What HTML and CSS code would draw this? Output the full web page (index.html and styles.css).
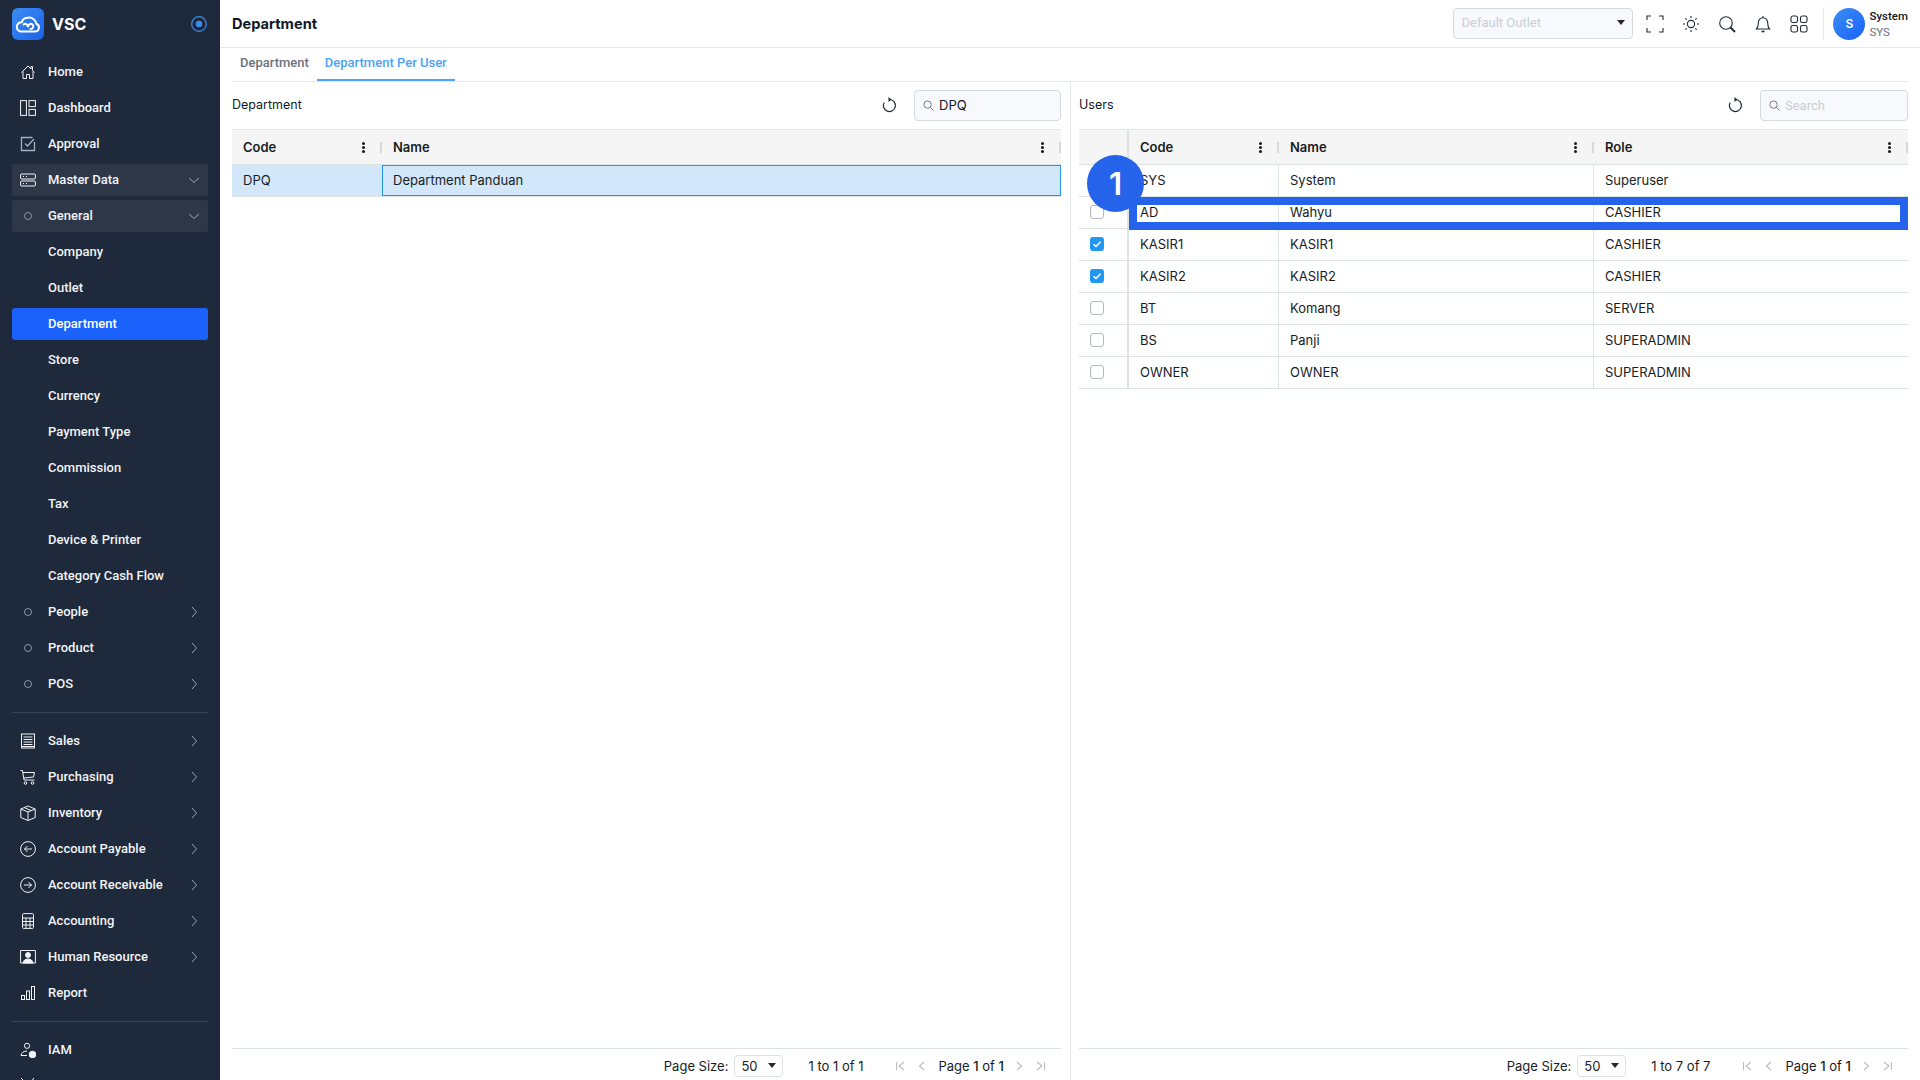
FILE: index.html

```html
<html lang="en">

<head>
    <meta charset="UTF-8">
    <meta name="viewport" content="width=device-width, initial-scale=1.0">
    <title>Department</title>
    <link rel="stylesheet" href="styles.css">
</head>

<body>
    <aside class="sidebar">
        <div class="brand">
            <div class="brand-logo">
                <svg width="26" height="22" viewBox="0 0 26 22" fill="none" stroke="#fff" stroke-width="2" stroke-linejoin="round" stroke-linecap="round">
                    <path d="M6 18.500h14a4 4 0 0 0 1.200-7.800 7 7 0 0 0-8.200-6 6 6 0 0 0-6.200 4.600A4.600 4.600 0 0 0 6 18.500z"/>
                    <path d="M8.500 11.500c2.200-1.600 4 .2 4.500 2 .5-1.800 2.500-3.600 4.500-2 1.800 1.500.5 4.500-2 4.500"/>
                </svg>
            </div>
            <span class="brand-name">VSC</span>
            <svg class="brand-pin" width="16" height="16" viewBox="0 0 16 16"><circle cx="8" cy="8" r="7.300" fill="none" stroke="#3b8df0" stroke-width="1.200"/><circle cx="8" cy="8" r="3.200" fill="#3b8df0"/></svg>
        </div>
        <nav class="menu">
            <a class="menu-item"><svg class="menu-icon" viewBox="0 0 16 16"><path d="M1.500 8.500 8 2l3 3V2.500h1.500V6.500l2 2M3 7.500v7h3.500v-4h3v4H13v-7"/></svg>Home</a>
            <a class="menu-item"><svg class="menu-icon" viewBox="0 0 16 16"><rect x=".6" y=".6" width="5.800" height="14.800"/><rect x="9" y=".6" width="6.400" height="6"/><rect x="9" y="9.400" width="6.400" height="6"/></svg>Dashboard</a>
            <a class="menu-item"><svg class="menu-icon icon-dim" viewBox="0 0 16 16"><path d="M14.500 6v8.500h-13v-13h11"/><path d="m5 7.500 2.500 2.500 6.500-7"/></svg>Approval</a>
            <a class="menu-item open"><svg class="menu-icon" viewBox="0 0 16 16"><rect x=".6" y="2" width="14.800" height="5" rx="1"/><rect x=".6" y="9" width="14.800" height="5" rx="1"/><path d="M3 4.500h1M3 11.500h1M6 4.500h1M6 11.500h1"/></svg>Master Data<svg class="chevron" viewBox="0 0 12 12"><path d="m1 4 5 4.500L11 4"/></svg></a>
            <a class="menu-item open"><span class="menu-dot"></span>General<svg class="chevron" viewBox="0 0 12 12"><path d="m1 4 5 4.500L11 4"/></svg></a>
            <a class="menu-item">Company</a>
            <a class="menu-item">Outlet</a>
            <a class="menu-item active">Department</a>
            <a class="menu-item">Store</a>
            <a class="menu-item">Currency</a>
            <a class="menu-item">Payment Type</a>
            <a class="menu-item">Commission</a>
            <a class="menu-item">Tax</a>
            <a class="menu-item">Device &amp; Printer</a>
            <a class="menu-item">Category Cash Flow</a>
            <a class="menu-item"><span class="menu-dot"></span>People<svg class="chevron" viewBox="0 0 12 12"><path d="m4 1 4.500 5L4 11"/></svg></a>
            <a class="menu-item"><span class="menu-dot"></span>Product<svg class="chevron" viewBox="0 0 12 12"><path d="m4 1 4.500 5L4 11"/></svg></a>
            <a class="menu-item"><span class="menu-dot"></span>POS<svg class="chevron" viewBox="0 0 12 12"><path d="m4 1 4.500 5L4 11"/></svg></a>
            <div class="menu-divider"></div>
            <a class="menu-item"><svg class="menu-icon" viewBox="0 0 16 16"><rect x="1.500" y="1" width="13" height="14"/><path d="M3.500 4h9M3.500 6.500h9M3.500 9h9M3.500 11.500h9M1.500 13.500h13"/></svg>Sales<svg class="chevron" viewBox="0 0 12 12"><path d="m4 1 4.500 5L4 11"/></svg></a>
            <a class="menu-item"><svg class="menu-icon" viewBox="0 0 16 16"><path d="M.5 1.500h2l1.500 9.500h10.500M3 3.500h11.500l-1 4.500-9.500 1"/><circle cx="5.500" cy="14" r="1.300"/><circle cx="12.500" cy="14" r="1.300"/></svg>Purchasing<svg class="chevron" viewBox="0 0 12 12"><path d="m4 1 4.500 5L4 11"/></svg></a>
            <a class="menu-item"><svg class="menu-icon" viewBox="0 0 16 16"><path d="M8 1 .8 4v8.500L8 15.500l7.200-3V4z"/><path d="M.8 4 8 7l7.200-3M8 7v8.500M4 2.500l7 3"/></svg>Inventory<svg class="chevron" viewBox="0 0 12 12"><path d="m4 1 4.500 5L4 11"/></svg></a>
            <a class="menu-item"><svg class="menu-icon" viewBox="0 0 16 16"><circle cx="8" cy="8" r="7.400"/><path d="M12 8H4.500M7.500 5 4.500 8l3 3"/></svg>Account Payable<svg class="chevron" viewBox="0 0 12 12"><path d="m4 1 4.500 5L4 11"/></svg></a>
            <a class="menu-item"><svg class="menu-icon" viewBox="0 0 16 16"><circle cx="8" cy="8" r="7.400"/><path d="M4 8h7.500M8.500 5l3 3-3 3"/></svg>Account Receivable<svg class="chevron" viewBox="0 0 12 12"><path d="m4 1 4.500 5L4 11"/></svg></a>
            <a class="menu-item"><svg class="menu-icon" viewBox="0 0 16 16"><rect x="2.500" y=".6" width="11" height="14.800" rx="1"/><path d="M2.500 5h11M2.500 8.500h11M2.500 12h11M6 5v10.400M10 5v10.400"/></svg>Accounting<svg class="chevron" viewBox="0 0 12 12"><path d="m4 1 4.500 5L4 11"/></svg></a>
            <a class="menu-item"><svg class="menu-icon" viewBox="0 0 16 16"><path d="M.6 1.500h14.800v12.500H.6z"/><circle cx="8" cy="6" r="2.500" fill="currentColor"/><path d="M3 14c.5-3 2.500-4 5-4s4.500 1 5 4z" fill="currentColor"/></svg>Human Resource<svg class="chevron" viewBox="0 0 12 12"><path d="m4 1 4.500 5L4 11"/></svg></a>
            <a class="menu-item"><svg class="menu-icon" viewBox="0 0 16 16"><rect x="1.500" y="10.500" width="3" height="4"/><rect x="6.500" y="6" width="3" height="8.500"/><rect x="11.500" y="1.500" width="3" height="13"/></svg>Report</a>
            <div class="menu-divider"></div>
            <a class="menu-item"><svg class="menu-icon" viewBox="0 0 16 16"><circle cx="7" cy="3.800" r="2.600"/><path d="M1 13.500c.3-3 3-4.500 6-4.500M1 13.500h6"/><circle cx="12.500" cy="12.500" r="3.300" fill="currentColor"/></svg>IAM</a>
            <a class="menu-item"><svg class="menu-icon" viewBox="0 0 16 16"><path d="M1 0l6 6M14 0 9 6M6 10l-4 4M10 10l4 4"/></svg></a>
        </nav>
    </aside>

    <div class="main">
        <header class="topbar">
            <h1>Department</h1>
            <div class="topbar-right">
                <div class="outlet-select"><span>Default Outlet</span><i class="caret"></i></div>
                <svg class="top-icon" viewBox="0 0 18 18"><path d="M1 5V1h4M13 1h4v4M17 13v4h-4M5 17H1v-4"/></svg>
                <svg class="top-icon" viewBox="0 0 18 18"><circle cx="9" cy="9" r="3.600"/><path d="M9 1v2M9 15v2M1 9h2M15 9h2M3.300 3.300l1.400 1.400M13.300 13.300l1.400 1.400M3.300 14.700l1.400-1.400M13.300 4.700l1.400-1.400"/></svg>
                <svg class="top-icon" viewBox="0 0 18 18"><circle cx="8" cy="8" r="6.300"/><path d="m12.500 12.500 4.500 4.500" stroke-width="1.800"/></svg>
                <svg class="top-icon" viewBox="0 0 18 18"><path d="M2.500 14h13c-1.500-1.500-1.800-3-1.800-6A4.700 4.700 0 0 0 9 2.800 4.700 4.700 0 0 0 4.300 8c0 3-.3 4.500-1.800 6zM9 1v1.800"/><path d="M7.500 16.500h3" stroke-width="1.600"/></svg>
                <svg class="top-icon" viewBox="0 0 18 18"><rect x="1" y="1" width="6.500" height="6.500" rx="1.800"/><rect x="10.500" y="1" width="6.500" height="6.500" rx="1.800"/><rect x="1" y="10.500" width="6.500" height="6.500" rx="1.800"/><rect x="10.500" y="10.500" width="6.500" height="6.500" rx="1.800"/></svg>
                <div class="user">
                    <div class="avatar">S</div>
                    <div class="user-text"><b>System</b><span>SYS</span></div>
                </div>
            </div>
        </header>

        <div class="tabs">
            <a class="tab">Department</a>
            <a class="tab active">Department Per User</a>
        </div>

        <div class="panels">
            <section class="panel panel-left">
                <div class="toolbar">
                    <span class="toolbar-title">Department</span>
                    <svg class="refresh" viewBox="0 0 16 16"><path d="M8.500 2.500a6 6 0 1 1-5.300 3"/><path d="M7.500 0 10.500 2.500 7.500 5z" fill="currentColor" stroke="none"/></svg>
                    <div class="search">
                        <svg viewBox="0 0 12 12"><circle cx="5" cy="5" r="4"/><path d="m8 8 3.500 3.500"/></svg>
                        <span class="search-value">DPQ</span>
                    </div>
                </div>
                <div class="grid">
                    <div class="grid-row grid-head">
                        <div class="cell col-code-l">Code<i class="dots"></i><i class="sep"></i></div>
                        <div class="cell col-fill">Name<i class="dots"></i><i class="sep"></i></div>
                    </div>
                    <div class="grid-row selected">
                        <div class="cell col-code-l">DPQ</div>
                        <div class="cell col-fill focused">Department Panduan</div>
                    </div>
                </div>
                <div class="pager">
                    <span>Page Size:</span>
                    <div class="size-select">50<i class="caret"></i></div>
                    <span class="pager-count">1 to 1 of 1</span>
                    <svg class="pager-icon" viewBox="0 0 12 12"><path d="M2.500 2v8M10 2 5 6l5 4"/></svg>
                    <svg class="pager-icon" viewBox="0 0 12 12"><path d="M8 2 3.500 6 8 10"/></svg>
                    <span class="pager-page">Page <b>1</b> of <b>1</b></span>
                    <svg class="pager-icon" viewBox="0 0 12 12"><path d="M4 2l4.500 4L4 10"/></svg>
                    <svg class="pager-icon" viewBox="0 0 12 12"><path d="M2 2l5 4-5 4M9.500 2v8"/></svg>
                </div>
            </section>

            <section class="panel panel-right">
                <div class="toolbar">
                    <span class="toolbar-title">Users</span>
                    <svg class="refresh" viewBox="0 0 16 16"><path d="M8.500 2.500a6 6 0 1 1-5.300 3"/><path d="M7.500 0 10.500 2.500 7.500 5z" fill="currentColor" stroke="none"/></svg>
                    <div class="search">
                        <svg viewBox="0 0 12 12"><circle cx="5" cy="5" r="4"/><path d="m8 8 3.500 3.500"/></svg>
                        <span class="search-holder">Search</span>
                    </div>
                </div>
                <div class="grid">
                    <div class="grid-row grid-head">
                        <div class="cell col-check"></div>
                        <div class="cell col-code">Code<i class="dots"></i><i class="sep"></i></div>
                        <div class="cell col-name">Name<i class="dots"></i><i class="sep"></i></div>
                        <div class="cell col-fill">Role<i class="dots"></i><i class="sep"></i></div>
                    </div>
                    <div class="grid-row">
                        <div class="cell col-check"><span class="checkbox"></span></div>
                        <div class="cell col-code">SYS</div>
                        <div class="cell col-name">System</div>
                        <div class="cell col-fill">Superuser</div>
                    </div>
                    <div class="grid-row">
                        <div class="cell col-check"><span class="checkbox"></span></div>
                        <div class="cell col-code">AD</div>
                        <div class="cell col-name">Wahyu</div>
                        <div class="cell col-fill">CASHIER</div>
                    </div>
                    <div class="grid-row">
                        <div class="cell col-check"><span class="checkbox checked"><svg viewBox="0 0 14 14"><path d="m3.500 7.200 2.500 2.300 4.500-4.800"/></svg></span></div>
                        <div class="cell col-code">KASIR1</div>
                        <div class="cell col-name">KASIR1</div>
                        <div class="cell col-fill">CASHIER</div>
                    </div>
                    <div class="grid-row">
                        <div class="cell col-check"><span class="checkbox checked"><svg viewBox="0 0 14 14"><path d="m3.500 7.200 2.500 2.300 4.500-4.800"/></svg></span></div>
                        <div class="cell col-code">KASIR2</div>
                        <div class="cell col-name">KASIR2</div>
                        <div class="cell col-fill">CASHIER</div>
                    </div>
                    <div class="grid-row">
                        <div class="cell col-check"><span class="checkbox"></span></div>
                        <div class="cell col-code">BT</div>
                        <div class="cell col-name">Komang</div>
                        <div class="cell col-fill">SERVER</div>
                    </div>
                    <div class="grid-row">
                        <div class="cell col-check"><span class="checkbox"></span></div>
                        <div class="cell col-code">BS</div>
                        <div class="cell col-name">Panji</div>
                        <div class="cell col-fill">SUPERADMIN</div>
                    </div>
                    <div class="grid-row">
                        <div class="cell col-check"><span class="checkbox"></span></div>
                        <div class="cell col-code">OWNER</div>
                        <div class="cell col-name">OWNER</div>
                        <div class="cell col-fill">SUPERADMIN</div>
                    </div>
                    <div class="callout-box"></div>
                    <div class="callout-badge">1</div>
                </div>
                <div class="pager">
                    <span>Page Size:</span>
                    <div class="size-select">50<i class="caret"></i></div>
                    <span class="pager-count">1 to 7 of 7</span>
                    <svg class="pager-icon" viewBox="0 0 12 12"><path d="M2.500 2v8M10 2 5 6l5 4"/></svg>
                    <svg class="pager-icon" viewBox="0 0 12 12"><path d="M8 2 3.500 6 8 10"/></svg>
                    <span class="pager-page">Page <b>1</b> of <b>1</b></span>
                    <svg class="pager-icon" viewBox="0 0 12 12"><path d="M4 2l4.500 4L4 10"/></svg>
                    <svg class="pager-icon" viewBox="0 0 12 12"><path d="M2 2l5 4-5 4M9.500 2v8"/></svg>
                </div>
            </section>
        </div>
    </div>
</body>

</html>
```

FILE: styles.css

```css
* {
    box-sizing: border-box;
}

body {
    margin: 0;
    height: 100vh;
    display: flex;
    overflow: hidden;
    background: #fff;
    color: #181d1f;
    font-family: 'Inter', 'Liberation Sans', sans-serif;
    font-size: 13px;
}

/* sidebar */
.sidebar {
    width: 220px;
    height: 100vh;
    flex-shrink: 0;
    overflow: hidden;
    background: #1e293b;
    color: #f1f3f6;
    padding: 8px 12px 0;
}

.brand {
    display: flex;
    align-items: center;
    height: 32px;
    margin-bottom: 16px;
}

.brand-logo {
    width: 32px;
    height: 32px;
    border-radius: 6px;
    background: linear-gradient(135deg, #3b8df5, #1c62e8);
    display: flex;
    justify-content: center;
    align-items: center;
}

.brand-name {
    margin-left: 8px;
    font-size: 16px;
    font-weight: 700;
    color: #fff;
}

.brand-pin {
    margin-left: auto;
    margin-right: 1px;
}

.menu-item {
    display: flex;
    align-items: center;
    height: 32px;
    margin-bottom: 4px;
    padding-left: 36px;
    padding-bottom: 2px;
    position: relative;
    border-radius: 3px;
    font-family: 'Roboto', sans-serif;
    font-size: 13px;
    font-weight: 500;
}

.menu-item.open {
    background: #2d3748;
}

.menu-item.active {
    background: #1a62fb;
    color: #fff;
}

.menu-icon {
    position: absolute;
    left: 8px;
    top: 8px;
    width: 16px;
    height: 16px;
    fill: none;
    stroke: currentColor;
    stroke-width: 1;
}

.icon-dim {
    stroke: #a8afba;
    stroke-width: 1.3;
}

.menu-dot {
    position: absolute;
    left: 12px;
    top: 12px;
    width: 8px;
    height: 8px;
    border: 1px solid #8d95a3;
    border-radius: 50%;
}

.chevron {
    position: absolute;
    right: 8px;
    top: 10px;
    width: 12px;
    height: 12px;
    fill: none;
    stroke: #a9b0bc;
    stroke-width: 0.9;
}

.menu-divider {
    height: 1px;
    margin: 12px 0;
    background: #374356;
}

/* top bar */
.main {
    flex: 1;
    min-width: 0;
    display: flex;
    flex-direction: column;
}

.topbar {
    height: 48px;
    flex-shrink: 0;
    display: flex;
    align-items: center;
    justify-content: space-between;
    padding: 0 12px;
    border-bottom: 1px solid #e5e7eb;
}

.topbar h1 {
    margin: 0;
    font-size: 14.600px;
    font-weight: 700;
    color: #111827;
}

.topbar-right {
    display: flex;
    align-items: center;
}

.outlet-select {
    width: 180px;
    height: 31px;
    margin-right: 13px;
    padding: 0 7px 2px;
    display: flex;
    align-items: center;
    justify-content: space-between;
    background: #f7f9fc;
    border: 1px solid #d5dae2;
    border-radius: 4px;
    font-family: 'Roboto', sans-serif;
    color: #c9ced7;
}

.caret {
    display: inline-block;
    width: 0;
    height: 0;
    border-left: 4px solid transparent;
    border-right: 4px solid transparent;
    border-top: 5px solid #1f2937;
}

.top-icon {
    width: 18px;
    height: 18px;
    margin-right: 18px;
    fill: none;
    stroke: #1f2937;
    stroke-width: 1.100;
}

.user {
    display: flex;
    align-items: center;
    height: 32px;
    margin-left: -3px;
    padding-left: 9px;
    border-left: 1px solid #e5e7eb;
}

.avatar {
    width: 32px;
    height: 32px;
    border-radius: 50%;
    background: linear-gradient(135deg, #3b8df5, #1a62fb);
    color: #fff;
    font-size: 12px;
    font-weight: 600;
    display: flex;
    justify-content: center;
    align-items: center;
}

.user-text {
    margin-left: 4px;
    display: flex;
    flex-direction: column;
    font-family: 'Roboto', sans-serif;
    font-size: 11.500px;
    line-height: 16px;
}

.user-text b {
    font-weight: 500;
    color: #111827;
}

.user-text span {
    color: #6b7280;
}

/* tabs */
.tabs {
    height: 34px;
    flex-shrink: 0;
    margin: 0 12px;
    display: flex;
    border-bottom: 1px solid #e5e7eb;
}

.tab {
    height: 33px;
    padding: 0 8px 2px;
    display: flex;
    align-items: center;
    font-family: 'Roboto', sans-serif;
    font-size: 13px;
    font-weight: 500;
    color: #6b7280;
    border-bottom: 2px solid transparent;
}

.tab.active {
    color: #4da3f7;
    border-bottom-color: #4da3f7;
}

/* panels */
.panels {
    flex: 1;
    min-height: 0;
    display: flex;
}

.panel {
    display: flex;
    flex-direction: column;
    min-width: 0;
}

.panel-left {
    width: 851px;
    padding: 0 9px 0 12px;
    border-right: 1px solid #e5e7eb;
}

.panel-left .search {
    width: 147px;
}

.panel-right {
    flex: 1;
    padding: 0 12px 0 8px;
}

.toolbar {
    height: 47px;
    flex-shrink: 0;
    display: flex;
    align-items: center;
}

.toolbar-title {
    margin-right: auto;
    margin-bottom: 2px;
    font-size: 12.500px;
    color: #111827;
}

.refresh {
    width: 16px;
    height: 16px;
    margin-right: 17px;
    margin-bottom: 2px;
    fill: none;
    stroke: #1f2937;
    stroke-width: 1.200;
    color: #1f2937;
}

.search {
    width: 148px;
    height: 31px;
    padding: 0 8px;
    display: flex;
    align-items: center;
    gap: 5px;
    background: #f7f9fc;
    border: 1px solid #d5dae2;
    border-radius: 4px;
}

.search svg {
    width: 11px;
    height: 11px;
    fill: none;
    stroke: #6b7280;
    stroke-width: 1;
}

.search-value {
    margin-bottom: 1px;
    color: #111827;
}

.search-holder {
    margin-bottom: 1px;
    font-family: 'Roboto', sans-serif;
    color: #c9ced7;
}

/* grid */
.grid {
    flex: 1;
    min-height: 0;
    position: relative;
}

.grid-row {
    display: flex;
    height: 32px;
    border-bottom: 1px solid #dde2e2;
}

.grid-head {
    height: 36px;
    border-top: 1px solid #e5e5e5;
    background: #f5f5f5;
    font-weight: 600;
}

.selected {
    background: #d2e8fa;
}

.cell {
    position: relative;
    display: flex;
    align-items: center;
    padding: 0 11px 1px;
}

.col-check {
    width: 50px;
    padding: 0 0 1px 11px;
    border-right: 2px solid #dde2e2;
}

.col-code {
    width: 150px;
    border-right: 1px solid #dde2e2;
}

.col-name {
    width: 315px;
    border-right: 1px solid #dde2e2;
}

.col-code-l {
    width: 150px;
}

.col-fill {
    flex: 1;
}

.grid-head .cell {
    padding-bottom: 0;
    border-right: none;
}

.grid-head .col-check {
    border-right: 2px solid #dde2e2;
}

.focused {
    border: 1px solid #2196f3;
    padding: 0 10px 1px;
}

.dots {
    position: absolute;
    right: 17px;
    top: 12px;
    width: 3px;
    height: 3px;
    border-radius: 50%;
    background: #181d1f;
    box-shadow: 0 4px 0 #181d1f, 0 8px 0 #181d1f;
}

.sep {
    position: absolute;
    right: 0;
    top: 12px;
    width: 2px;
    height: 11px;
    background: #d8d8d8;
}

.checkbox {
    display: block;
    width: 14px;
    height: 14px;
    border: 1px solid #b5b9bd;
    border-radius: 3px;
    background: #fff;
}

.checkbox.checked {
    border: none;
    background: #2196f3;
}

.checkbox svg {
    display: block;
    fill: none;
    stroke: #fff;
    stroke-width: 1.500;
}

/* guide markers over the grid */
.callout-box {
    position: absolute;
    left: 50px;
    right: 0;
    top: 68px;
    height: 33px;
    border: 8px solid #2563eb;
}

.callout-badge {
    position: absolute;
    left: 8px;
    top: 26px;
    width: 57px;
    height: 57px;
    border-radius: 50%;
    background: #2563eb;
    color: #fff;
    font-size: 31px;
    font-weight: 600;
    display: flex;
    justify-content: center;
    align-items: center;
}

/* pager */
.pager {
    height: 32px;
    flex-shrink: 0;
    padding: 2px 14px 0 0;
    display: flex;
    align-items: center;
    justify-content: flex-end;
    border-top: 1px solid #dde2e2;
    color: #181d1f;
}

.size-select {
    width: 49px;
    height: 22px;
    margin-left: 6px;
    padding: 0 6px;
    display: flex;
    align-items: center;
    justify-content: space-between;
    border: 1px solid #dde2e2;
    border-radius: 4px;
}

.pager-count {
    margin-left: 25px;
    margin-right: 31px;
}

.pager-icon {
    width: 12px;
    height: 12px;
    margin-right: 10px;
    fill: none;
    stroke: #b9bdc1;
    stroke-width: 1.100;
}

.pager-icon:last-child {
    margin-right: 0;
}

.pager-page {
    margin: 0 9px 0 0;
}

.pager-page b {
    font-weight: 500;
}
```
